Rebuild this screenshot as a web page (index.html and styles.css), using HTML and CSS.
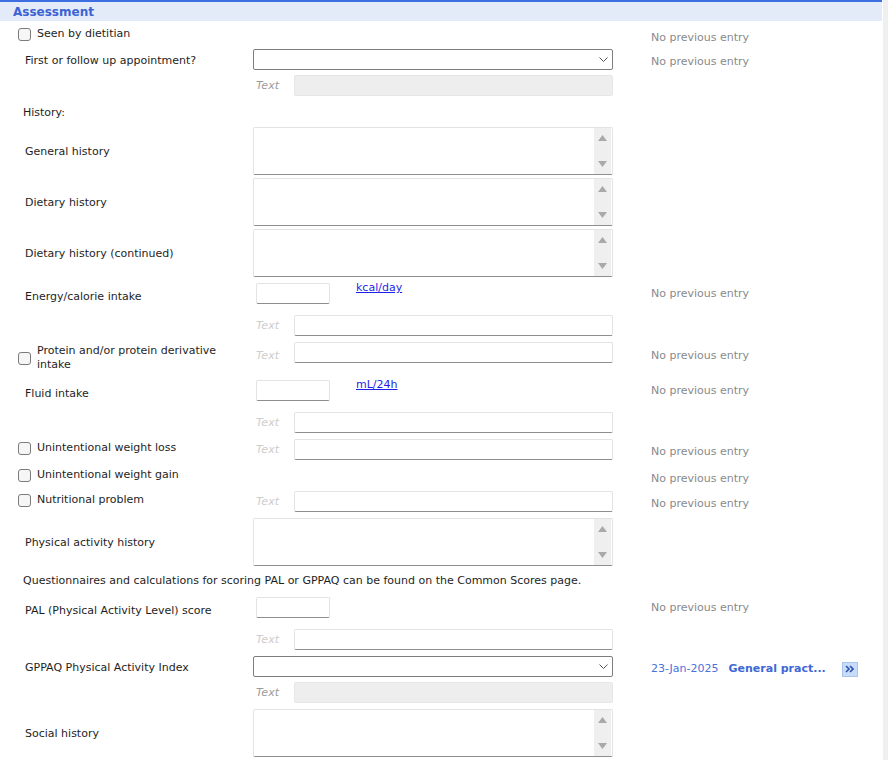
FILE: index.html
```html
<!DOCTYPE html>
<html lang="en">
<head>
    <meta charset="UTF-8">
    <title>Assessment</title>
    <link rel="stylesheet" href="styles.css">
</head>
<body>
<div class="page">
    <div class="header">Assessment</div>

    <div class="row row-check first">
        <label class="check"><input type="checkbox"> <span>Seen by dietitian</span></label>
        <div></div>
        <div class="prev">No previous entry</div>
    </div>

    <div class="row row-select">
        <div class="label">First or follow up appointment?</div>
        <div class="select-wrap">
            <select class="select"><option></option></select>
            <svg class="chevron" width="9" height="5" viewBox="0 0 9 5"><path d="M0.5 0.5 L4.5 4.5 L8.5 0.5" fill="none" stroke="#555" stroke-width="1"/></svg>
        </div>
        <div class="prev">No previous entry</div>
    </div>

    <div class="row row-note">
        <div></div>
        <div class="note disabled"><span class="note-label">Text</span><input class="field" type="text" disabled></div>
        <div></div>
    </div>

    <div class="row row-heading">
        <div class="label heading">History:</div>
    </div>

    <div class="row row-memo">
        <div class="label">General history</div>
        <div class="memo"><textarea></textarea><div class="scroll"><svg width="17" height="46" viewBox="0 0 17 46"><polygon points="4,13 13,13 8.5,7" fill="#a9a9a9"/><polygon points="4,33 13,33 8.5,39" fill="#a9a9a9"/></svg></div></div>
    </div>

    <div class="row row-memo">
        <div class="label">Dietary history</div>
        <div class="memo"><textarea></textarea><div class="scroll"><svg width="17" height="46" viewBox="0 0 17 46"><polygon points="4,13 13,13 8.5,7" fill="#a9a9a9"/><polygon points="4,33 13,33 8.5,39" fill="#a9a9a9"/></svg></div></div>
    </div>

    <div class="row row-memo">
        <div class="label">Dietary history (continued)</div>
        <div class="memo"><textarea></textarea><div class="scroll"><svg width="17" height="46" viewBox="0 0 17 46"><polygon points="4,13 13,13 8.5,7" fill="#a9a9a9"/><polygon points="4,33 13,33 8.5,39" fill="#a9a9a9"/></svg></div></div>
    </div>

    <div class="row row-qty">
        <div class="label">Energy/calorie intake</div>
        <div class="qty"><input class="field small" type="text"><a href="#" class="unit">kcal/day</a></div>
        <div class="prev">No previous entry</div>
    </div>

    <div class="row row-note">
        <div></div>
        <div class="note"><span class="note-label">Text</span><input class="field" type="text"></div>
        <div></div>
    </div>

    <div class="row row-check tall">
        <label class="check"><input type="checkbox"> <span>Protein and/or protein derivative intake</span></label>
        <div class="note"><span class="note-label">Text</span><input class="field" type="text"></div>
        <div class="prev">No previous entry</div>
    </div>

    <div class="row row-qty">
        <div class="label">Fluid intake</div>
        <div class="qty"><input class="field small" type="text"><a href="#" class="unit">mL/24h</a></div>
        <div class="prev">No previous entry</div>
    </div>

    <div class="row row-note">
        <div></div>
        <div class="note"><span class="note-label">Text</span><input class="field" type="text"></div>
        <div></div>
    </div>

    <div class="row row-check">
        <label class="check"><input type="checkbox"> <span>Unintentional weight loss</span></label>
        <div class="note"><span class="note-label">Text</span><input class="field" type="text"></div>
        <div class="prev">No previous entry</div>
    </div>

    <div class="row row-check short">
        <label class="check"><input type="checkbox"> <span>Unintentional weight gain</span></label>
        <div></div>
        <div class="prev">No previous entry</div>
    </div>

    <div class="row row-check">
        <label class="check"><input type="checkbox"> <span>Nutritional problem</span></label>
        <div class="note"><span class="note-label">Text</span><input class="field" type="text"></div>
        <div class="prev">No previous entry</div>
    </div>

    <div class="row row-memo">
        <div class="label">Physical activity history</div>
        <div class="memo"><textarea></textarea><div class="scroll"><svg width="17" height="46" viewBox="0 0 17 46"><polygon points="4,13 13,13 8.5,7" fill="#a9a9a9"/><polygon points="4,33 13,33 8.5,39" fill="#a9a9a9"/></svg></div></div>
    </div>

    <div class="info">Questionnaires and calculations for scoring PAL or GPPAQ can be found on the Common Scores page.</div>

    <div class="row row-qty">
        <div class="label">PAL (Physical Activity Level) score</div>
        <div class="qty"><input class="field small" type="text"></div>
        <div class="prev">No previous entry</div>
    </div>

    <div class="row row-note">
        <div></div>
        <div class="note"><span class="note-label">Text</span><input class="field" type="text"></div>
        <div></div>
    </div>

    <div class="row row-select last">
        <div class="label">GPPAQ Physical Activity Index</div>
        <div class="select-wrap">
            <select class="select"><option></option></select>
            <svg class="chevron" width="9" height="5" viewBox="0 0 9 5"><path d="M0.5 0.5 L4.5 4.5 L8.5 0.5" fill="none" stroke="#555" stroke-width="1"/></svg>
        </div>
        <div class="prev entry">
            <span class="date">23-Jan-2025</span>
            <span class="source">General pract...</span>
            <button class="more" type="button"><svg width="9" height="8" viewBox="0 0 9 8"><path d="M1 1 L4 4 L1 7 M5 1 L8 4 L5 7" fill="none" stroke="#3152a8" stroke-width="1.6"/></svg></button>
        </div>
    </div>

    <div class="row row-note">
        <div></div>
        <div class="note disabled"><span class="note-label">Text</span><input class="field" type="text" disabled></div>
        <div></div>
    </div>

    <div class="row row-memo social">
        <div class="label">Social history</div>
        <div class="memo"><textarea></textarea><div class="scroll"><svg width="17" height="46" viewBox="0 0 17 46"><polygon points="4,13 13,13 8.5,7" fill="#a9a9a9"/><polygon points="4,33 13,33 8.5,39" fill="#a9a9a9"/></svg></div></div>
    </div>
</div>
</body>
</html>
```

FILE: styles.css
```css
* {
    box-sizing: border-box;
}
body {
    margin: 0;
    background-color: #efefef;
    font-family: "DejaVu Sans", Verdana, sans-serif;
    font-size: 11px;
    line-height: 16px;
    color: #1e1e1e;
}
.page {
    width: 883px;
    min-height: 760px;
    background-color: #fff;
    overflow: hidden;
}
.header {
    height: 21px;
    margin-right: 1px;
    padding: 1px 0 0 13px;
    border-top: 2px solid #3d6fe3;
    background-color: #e3ebf8;
    font-size: 12px;
    font-weight: bold;
    line-height: 18px;
    color: #3b63d4;
}

/* rows: label | field | previous entry */
.row {
    display: grid;
    grid-template-columns: 253px 360px 1fr;
    align-items: start;
}
.label {
    padding-left: 25px;
}
.prev {
    padding-left: 38px;
    color: #8a8a8a;
}

/* checkbox rows */
.row-check {
    height: 27px;
}
.row-check.short {
    height: 25px;
}
.row-check .check {
    padding-top: 5px;
}
.row-check .prev {
    padding-top: 9px;
}
.row-check .note {
    padding-top: 4px;
}
.row-check .note-label {
    padding-top: 3px;
}
.row-check.tall {
    height: 36px;
    align-items: center;
}
.row-check.tall .check {
    padding-top: 4px;
    line-height: 14px;
}
.row-check.tall .prev {
    padding-top: 0;
}
.row-check.tall .note {
    align-self: start;
    padding-top: 4px;
}
.row-check.tall .note-label {
    padding-top: 6px;
}
.check {
    display: flex;
    align-items: center;
    gap: 6px;
    padding-left: 18px;
    padding-right: 30px;
}
.check input {
    appearance: none;
    flex: none;
    width: 13px;
    height: 13px;
    margin: 0;
    border: 1px solid #7b7b7b;
    border-radius: 3px;
    background-color: #f6f6f6;
}

/* select rows */
.row-select {
    height: 26px;
}
.row-select .select-wrap {
    margin-top: 1px;
}
.row-select .label {
    padding-top: 5px;
}
.row-select .prev {
    padding-top: 6px;
}
.row-select.last {
    height: 29px;
}
.row-select.last .select-wrap {
    margin-top: 4px;
}
.row-select.last .label {
    padding-top: 8px;
}
.row-select.last .prev {
    padding-top: 9px;
}
.select-wrap {
    position: relative;
    width: 360px;
    height: 21px;
}
.select {
    appearance: none;
    width: 100%;
    height: 21px;
    margin: 0;
    border: 1px solid #7d7d7d;
    border-radius: 2px;
    background-color: #fff;
    font: inherit;
}
.chevron {
    position: absolute;
    top: 8px;
    right: 5px;
}

/* "Text" comment rows */
.row-note {
    height: 24px;
}
.note {
    display: flex;
    align-items: flex-start;
}
.row-note .note {
    padding-top: 1px;
}
.row-note .note-label {
    padding-top: 3px;
}
.note-label {
    width: 41px;
    padding-left: 3px;
    font-style: italic;
    color: #cdcdcd;
}
.note.disabled .note-label {
    color: #9b9b9b;
}
.field {
    height: 21px;
    margin: 0;
    padding: 0 4px;
    border: 1px solid #e3e3e3;
    border-bottom-color: #8e8e8e;
    border-radius: 2px;
    background-color: #fff;
    font: inherit;
}
.note .field {
    width: 319px;
}
.field:disabled {
    border-color: #e6e6e6;
    background-color: #eeeeee;
}

/* quantity rows with a unit link */
.row-qty {
    height: 37px;
}
.row-qty .label {
    padding-top: 12px;
}
.row-qty .prev {
    padding-top: 9px;
}
.qty {
    display: flex;
    align-items: flex-start;
}
.field.small {
    width: 74px;
    margin: 6px 0 0 3px;
}
.unit {
    margin: 3px 0 0 26px;
    color: #1f1fe8;
}

/* headings and notes */
.row-heading {
    height: 29px;
}
.heading {
    padding: 7px 0 0 23px;
}
.info {
    height: 25px;
    padding: 7px 0 0 23px;
}

/* multi-line text boxes */
.row-memo {
    height: 48px;
    margin-top: 3px;
}
.row-heading + .row-memo,
.row-qty + .row-memo {
    margin-top: 0;
}
.row-check + .row-memo,
.row-memo.social {
    margin-top: 4px;
}
.row-memo .label {
    padding-top: 17px;
}
.memo {
    display: flex;
    width: 360px;
    height: 48px;
    border: 1px solid #e3e3e3;
    border-bottom-color: #8e8e8e;
    border-radius: 2px;
}
.memo textarea {
    flex: 1;
    border: none;
    resize: none;
    overflow: hidden;
    font: inherit;
    outline: none;
}
.scroll {
    width: 17px;
    margin-right: 1px;
    background-color: #efefef;
}
.scroll svg {
    display: block;
}

/* last recorded value */
.entry {
    display: flex;
    align-items: center;
}
.date {
    color: #4a72d9;
}
.source {
    width: 113px;
    margin-left: 10px;
    font-weight: bold;
    color: #3e68d6;
}
.more {
    display: flex;
    align-items: center;
    justify-content: center;
    width: 16px;
    height: 15px;
    padding: 0;
    border: 1px solid #a9c4ea;
    background-color: #c6dcf8;
}
```
